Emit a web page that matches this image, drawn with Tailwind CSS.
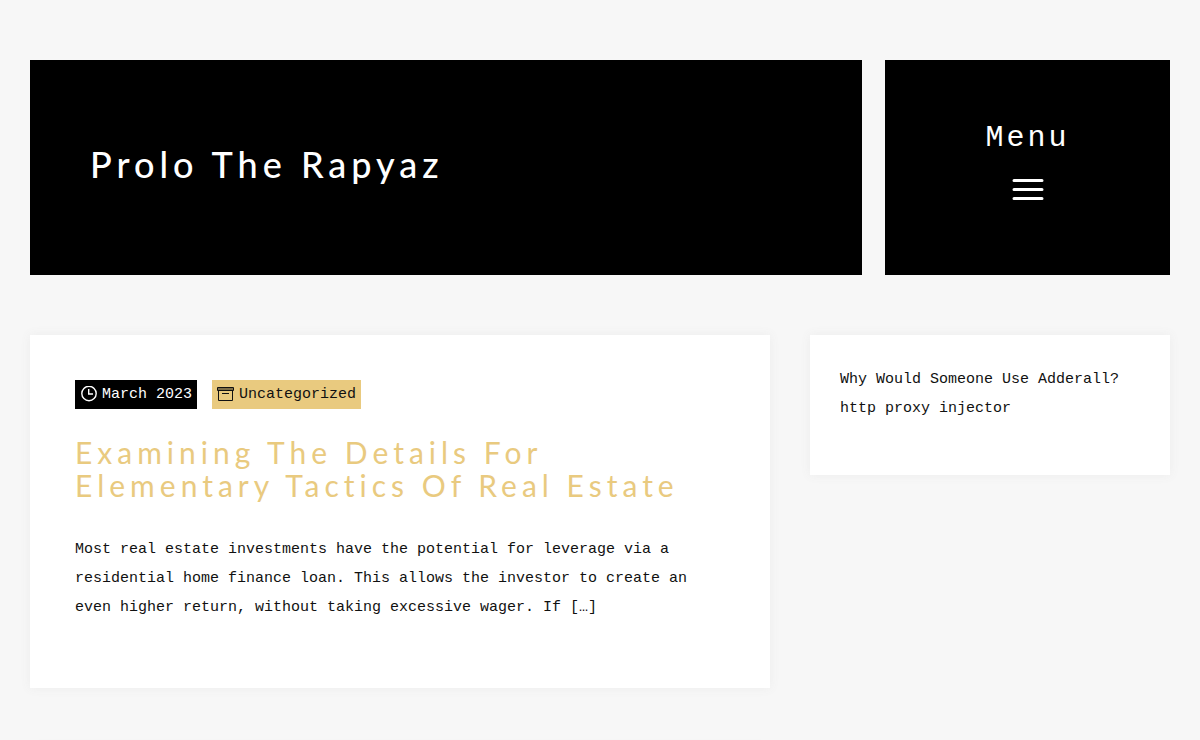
<!DOCTYPE html>
<html lang="en">

<head>
    <meta charset="UTF-8">
    <meta name="viewport" content="width=device-width, initial-scale=1.0">
    <title>Prolo The Rapyaz</title>
    <script src="https://cdn.jsdelivr.net/npm/@tailwindcss/browser@4"></script>
</head>

<body class="bg-[#f7f7f7] text-[#111] font-['Liberation_Mono',monospace] text-[15px] leading-[29px]">
    <div class="px-[30px] pt-[60px]">
        <header class="flex justify-between mb-[60px]">
            <div class="w-[73%] min-h-[215px] bg-black flex items-center px-[60px] pb-2">
                <h1 class="font-['Lato',sans-serif] text-[36px] leading-[40px] font-medium tracking-[5px] text-white">
                    <a href="#">Prolo The Rapyaz</a>
                </h1>
            </div>
            <button type="button"
                class="w-1/4 bg-black text-white flex flex-col items-center justify-center gap-6 pb-3 cursor-pointer">
                <span class="text-[30px] leading-[32px] tracking-[3px]">Menu</span>
                <svg class="w-8 h-6" viewBox="0 0 32 24" fill="none" stroke="currentColor" stroke-width="3"
                    stroke-linecap="round" aria-hidden="true">
                    <path d="M2 2.5h28M2 11.5h28M2 20.5h28" />
                </svg>
            </button>
        </header>

        <div class="flex items-start gap-10">
            <main class="flex-1">
                <article class="bg-white shadow-[0_0_10px_#ececec] px-[45px] pt-[45px] pb-[66px] mb-[60px]">
                    <div class="flex gap-[15px]">
                        <a href="#" class="bg-black text-white flex items-center gap-1 px-[5px]">
                            <svg class="w-[18px] h-[18px]" viewBox="0 0 18 18" fill="none" stroke="currentColor"
                                stroke-width="1.4" aria-hidden="true">
                                <circle cx="9" cy="7.5" r="7.2" />
                                <path d="M8.7 3v5h4.3" />
                            </svg>
                            March 2023
                        </a>
                        <a href="#" class="bg-[#e9ca7f] flex items-center gap-1 px-[5px]">
                            <svg class="w-[18px] h-[18px]" viewBox="0 0 18 18" fill="none" stroke="currentColor"
                                stroke-width="1" aria-hidden="true">
                                <path d="M.5 1.5h16v3H.5zM.5 3h16M1.5 4.5v10h14v-10M5 7.5h7" />
                            </svg>
                            Uncategorized
                        </a>
                    </div>
                    <h2 class="mt-[27px] mb-[33px] font-['Lato',sans-serif] text-[30px] leading-[33px] tracking-[5px] text-[#e9ca7f]">
                        <a href="#">Examining The Details For Elementary Tactics Of Real Estate</a>
                    </h2>
                    <p>Most real estate investments have the potential for leverage via a residential home finance
                        loan. This allows the investor to create an even higher return, without taking excessive wager.
                        If […]</p>
                </article>
                <article class="bg-white shadow-[0_0_10px_#ececec] min-h-[353px]"></article>
            </main>

            <aside class="w-[360px] bg-white shadow-[0_0_10px_#ececec] px-[30px] pt-[30px] pb-[52px]">
                <ul>
                    <li><a href="#">Why Would Someone Use Adderall?</a></li>
                    <li><a href="#">http proxy injector</a></li>
                </ul>
            </aside>
        </div>
    </div>
</body>

</html>
